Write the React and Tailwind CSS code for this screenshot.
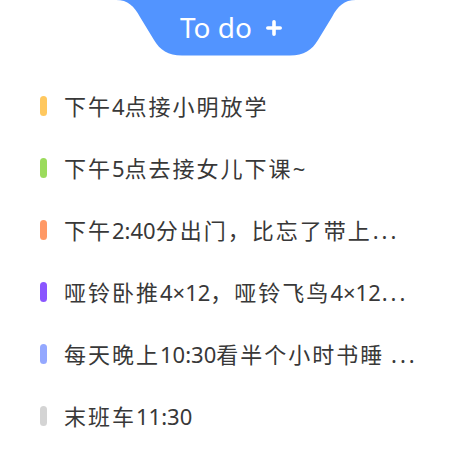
import React from "react";

const items = [
  { color: "bg-[#ffc85f]", text: "下午4点接小明放学" },
  { color: "bg-[#9bdb5c]", text: "下午5点去接女儿下课~" },
  { color: "bg-[#ff9966]", text: "下午2:40分出门，比忘了带上..." },
  { color: "bg-[#8a56ff]", text: "哑铃卧推4×12，哑铃飞鸟4×12..." },
  { color: "bg-[#94a8ff]", text: "每天晚上10:30看半个小时书睡 ..." },
  { color: "bg-[#d4d4d4]", text: "末班车11:30" },
];

function Runs({ text }) {
  const parts = text.split(/([\u3000-\u9fff\uff00-\uffef]+|\.{3})/).filter(Boolean);
  return parts.map((p, i) => {
    if (/^[\u3000-\u9fff\uff00-\uffef]+$/.test(p)) {
      return (
        <span key={i} className="tracking-[2px]">
          {p}
        </span>
      );
    }
    if (p === "...") {
      return (
        <span key={i} className="ml-[1px] tracking-[3px]">
          {p}
        </span>
      );
    }
    return <span key={i}>{p}</span>;
  });
}

export default function App() {
  return (
    <div
      className="w-[472px] h-[472px] bg-white flex flex-col items-center overflow-hidden"
      style={{ fontFamily: '"Noto Sans", "Noto Sans CJK SC", sans-serif' }}
    >
      <div className="relative w-[240px] h-[56px] shrink-0">
        <svg className="absolute inset-0" width="240" height="56" viewBox="0 0 240 56">
          <path
            d="M0,0 C12,0 18,6 24,17 L38,40 C44,50 52,55.5 66,55.5 L174,55.5 C188,55.5 196,50 202,40 L216,17 C222,6 228,0 240,0 Z"
            fill="#5294ff"
          />
        </svg>
        <div className="relative flex items-center justify-center h-[56px] pb-[2px] pr-[10px] text-white">
          <span className="text-[28px] leading-none">To do</span>
          <svg className="ml-[14px] mt-[1px]" width="16" height="16" viewBox="0 0 16 16">
            <path d="M8 1.8 V14.2 M1.8 8 H14.2" stroke="white" strokeWidth="3.6" strokeLinecap="round" />
          </svg>
        </div>
      </div>
      <div className="w-full flex flex-col pl-[40px] mt-[19px]">
        {items.map((it, i) => (
          <div key={i} className="h-[62px] flex items-center">
            <div className={`w-[7px] h-[20px] rounded-full ${it.color}`} />
            <span className="ml-[17px] text-[22px] leading-none text-[#383838] whitespace-nowrap">
              <Runs text={it.text} />
            </span>
          </div>
        ))}
      </div>
    </div>
  );
}
